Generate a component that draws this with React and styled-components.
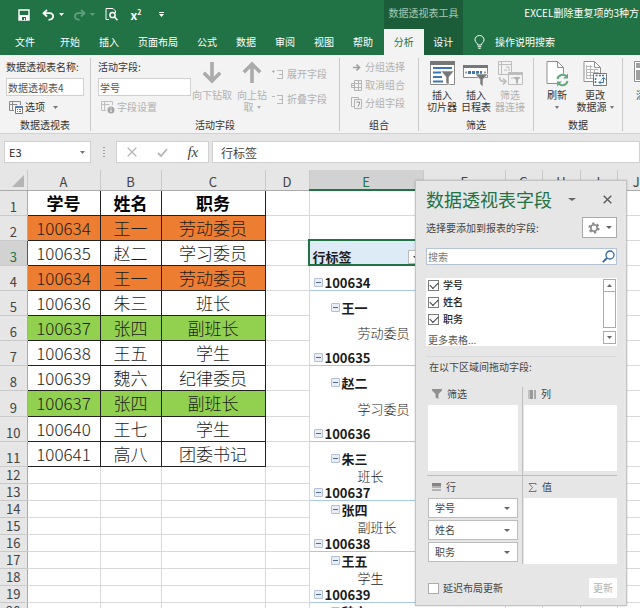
import React, { useState } from 'react'
import styled, { createGlobalStyle } from 'styled-components'

const GREEN = '#217346'
const DARK_GREEN = '#1b5c39'
const UI_FONT = '"Noto Sans CJK SC", "Noto Sans", sans-serif'

const GlobalStyle = createGlobalStyle`
  * {
    box-sizing: border-box;
  }

  body {
    margin: 0;
    font-family: ${UI_FONT};
    font-size: 10px;
    line-height: 12px;
    color: #333;
  }

  button,
  input {
    margin: 0;
    padding: 0;
    font: inherit;
    color: inherit;
    border: 0;
    background: none;
    border-radius: 0;
  }

  svg {
    display: block;
    flex: none;
  }
`

const Window = styled.div`
  display: flex;
  flex-direction: column;
  height: 100vh;
  overflow: hidden;
  background: #e6e6e6;
`

/* Header */

const Header = styled.header`
  display: flex;
  height: 55px;
  flex: none;
  background: ${GREEN};
  color: #fff;
  white-space: nowrap;
`

const HeaderSection = styled.div`
  display: flex;
  flex-direction: column;
  flex: ${p => p.$flex};
  background: ${p => (p.$dark ? DARK_GREEN : 'transparent')};
  overflow: hidden;
`

const TitleRow = styled.div`
  display: flex;
  align-items: center;
  justify-content: ${p => p.$justify || 'flex-start'};
  height: 29px;
  padding: 0 ${p => p.$right || 0}px 0 ${p => p.$left || 0}px;
`

const ContextTitle = styled.span`
  width: 100%;
  padding-bottom: 4px;
  text-align: center;
  color: #a5c9b3;
`

const DocumentTitle = styled.span`
  padding-bottom: 4px;
`

const QuickButton = styled.button`
  display: flex;
  align-items: center;
  justify-content: center;
  gap: 4px;
  width: ${p => p.$width}px;
  height: 24px;
  color: #fff;
  opacity: ${p => (p.disabled ? 0.3 : 1)};
`

const Superscript = styled.span`
  font-weight: bold;
  font-size: 12px;

  sup {
    font-size: 7px;
    line-height: 0;
  }
`

const TabRow = styled.nav`
  display: flex;
  gap: ${p => p.$gap || 0}px;
  height: 26px;
`

const Tab = styled.button`
  padding: 0 ${p => p.$pad || 9}px;
  flex: ${p => (p.$grow ? 1 : 'none')};
  color: ${p => (p.$active ? GREEN : '#fff')};
  background: ${p => (p.$active ? '#f3f3f3' : 'transparent')};
`

const TellMe = styled.button`
  display: flex;
  align-items: center;
  gap: 10px;
  padding-left: 11px;
`

/* Ribbon */

const Ribbon = styled.div`
  display: flex;
  flex: none;
  height: 79px;
  overflow: hidden;
  padding: 3px 0 2px;
  background: #f3f3f3;
  border-bottom: 1px solid #d2d2d2;
  white-space: nowrap;
`

const Group = styled.section`
  display: flex;
  flex-direction: column;
  flex: none;
  width: ${p => p.$width}px;
  border-right: 1px solid #c8c8c8;
`

const GroupBody = styled.div`
  display: flex;
  flex: 1;
  padding: 0 ${p => p.$pad || 0}px;
  justify-content: ${p => p.$justify || 'flex-start'};
`

const GroupLabel = styled.h2`
  margin: 0;
  font-size: 10px;
  font-weight: normal;
  line-height: 12px;
  text-align: center;
`

const Stack = styled.div`
  display: flex;
  flex-direction: column;
  align-items: flex-start;
  padding-top: ${p => p.$top || 0}px;
  gap: ${p => p.$gap || 0}px;
  margin-left: ${p => p.$left || 0}px;
`

const RibbonLabel = styled.label`
  line-height: 12px;
  padding-bottom: 1px;
`

const RibbonInput = styled.input`
  width: ${p => p.$width}px;
  height: 18px;
  padding: 0 1px;
  background: #fff;
  border: 1px solid #d0d0d0;
  color: #555;
`

const SmallButton = styled.button`
  display: flex;
  align-items: center;
  gap: ${p => p.$gap || 3}px;
  height: 14px;
  padding-left: ${p => p.$left || 0}px;
  color: ${p => (p.disabled ? '#b1b1b1' : '#333')};
`

const OptionsLabel = styled.span`
  margin-right: 6px;
`

const LargeButton = styled.button`
  display: flex;
  flex-direction: column;
  align-items: center;
  width: ${p => p.$width}px;
  padding-top: 3px;
  color: ${p => (p.disabled ? '#b1b1b1' : '#333')};
`

const LargeIcon = styled.span`
  display: flex;
  align-items: flex-start;
  height: 28px;
`

const ButtonLine = styled.span`
  display: flex;
  align-items: center;
  gap: 3px;
  height: 12px;
  line-height: 12px;
`

/* Formula bar */

const FormulaBar = styled.div`
  display: flex;
  flex: none;
  align-items: center;
  height: 36px;
  padding-left: 4px;
`

const NameBox = styled.div`
  display: flex;
  align-items: center;
  width: 87px;
  height: 22px;
  padding-right: 5px;
  background: #fff;
  border: 1px solid #d0d0d0;

  input {
    flex: 1;
    min-width: 0;
    padding-left: 4px;
    font-size: 11px;
    color: #222;
  }
`

const Grip = styled.div`
  width: 25px;
  display: flex;
  justify-content: center;
`

const FormulaTools = styled.div`
  display: flex;
  width: 93px;
  height: 22px;
  background: #fff;
  border: 1px solid #d0d0d0;

  button {
    display: flex;
    flex: 1;
    align-items: center;
    justify-content: center;
    color: #b4b4b4;
  }
`

const FxLabel = styled.span`
  font: italic 15px 'Liberation Serif', serif;
  color: #444;
`

const FormulaInput = styled.input`
  flex: 1;
  min-width: 0;
  height: 22px;
  margin-left: 3px;
  padding-left: 8px;
  font-size: 12px;
  color: #444;
  background: #fff;
  border: 1px solid #d0d0d0;
`

/* Sheet */

const SheetArea = styled.main`
  position: relative;
  flex: 1;
  min-height: 0;
  overflow: hidden;
  background: #fff;
`

const Sheet = styled.table`
  table-layout: fixed;
  width: 100%;
  min-width: 656px;
  border-collapse: collapse;
  font-size: 13px;
  line-height: 15px;
`

const ColumnHead = styled.th`
  height: 20px;
  padding: 3px 0 0;
  font-weight: normal;
  color: ${p => (p.$selected ? GREEN : '#444')};
  background: ${p => (p.$selected ? '#d2d2d2' : '#e6e6e6')};
  border-right: 1px solid #c9c9c9;
  border-bottom: ${p => (p.$selected ? `2px solid ${GREEN}` : '1px solid #ababab')};

  svg {
    margin: 0 3px 0 auto;
  }
`

const Row = styled.tr`
  height: ${p => p.$height}px;
`

const RowHead = styled.th`
  padding: 0 0 1px;
  vertical-align: bottom;
  font-weight: normal;
  color: ${p => (p.$selected ? GREEN : '#444')};
  background: ${p => (p.$selected ? '#d2d2d2' : '#e6e6e6')};
  border-right: 1px solid ${p => (p.$selected ? GREEN : '#ababab')};
  border-bottom: 1px solid #c9c9c9;
`

const Cell = styled.td`
  padding: 0;
  border-right: 1px solid #d9d9d9;
  border-bottom: 1px solid #d9d9d9;
`

const fills = { orange: '#ed7d31', green: '#92d050' }

const DataCell = styled.td`
  padding: 0;
  font-size: 17px;
  line-height: 20px;
  text-align: center;
  white-space: nowrap;
  font-weight: ${p => (p.$head ? 'bold' : 300)};
  color: ${p => (p.$head ? '#000' : '#1c1c1c')};
  background: ${p => fills[p.$fill] || '#fff'};
  border: 1px solid #222;
`

const PivotCell = styled.td`
  padding: 0;
  vertical-align: bottom;
  color: #1c1c1c;
  border-bottom: ${p => (p.$level === 1 ? '1px solid #a9c8e6' : '0')};
`

const PivotItem = styled.div`
  display: flex;
  align-items: center;
  gap: 2px;
  padding-left: ${p => [0, 4, 21, 48][p.$level]}px;
  font-weight: ${p => (p.$level < 3 ? 'bold' : 300)};
  white-space: nowrap;
`

const ToggleButton = styled.button`
  width: 9px;
  height: 9px;
  padding: 3px 1px;
  background: #e9eef6;
  border: 1px solid #b4bfd1;
  border-radius: 1px;

  &::after {
    content: '';
    display: block;
    height: 1px;
    background: #4d6a94;
  }
`

const SelectedCell = styled.td`
  padding: 0;
  vertical-align: bottom;
  font-weight: bold;
  color: #1c1c1c;
  background: #ddebf7;
  outline: 2px solid ${GREEN};
  outline-offset: -1px;
`

const SelectedContent = styled.div`
  display: flex;
  align-items: flex-end;
  justify-content: space-between;
  padding: 0 1px 1px 3px;
`

const FilterButton = styled.button`
  display: flex;
  align-items: center;
  justify-content: center;
  width: 14px;
  height: 14px;
  background: #fff;
  border: 1px solid #bbb;
`

/* Field pane, floats over the sheet */

const Pane = styled.aside`
  position: absolute;
  top: 10px;
  right: 13px;
  width: 212px;
  padding: 7px 9px 7px 10px;
  background: #e6e6e6;
  border: 1px solid #c3c3c3;
  box-shadow: 0 0 2px rgba(0, 0, 0, 0.2);
  color: #444;
  white-space: nowrap;
`

const PaneHeader = styled.div`
  display: flex;
  align-items: center;
  height: 22px;

  h1 {
    margin: 0;
    flex: none;
    font-size: 18px;
    font-weight: normal;
    line-height: 22px;
    color: ${GREEN};
  }
`

const PaneButton = styled.button`
  display: flex;
  align-items: center;
  justify-content: center;
  width: 20px;
  height: 20px;
  margin-left: ${p => (p.$end ? 'auto' : '10px')};
`

const ChooseRow = styled.div`
  display: flex;
  align-items: center;
  justify-content: space-between;
  margin-top: 7px;
  height: 21px;
`

const GearButton = styled.button`
  display: flex;
  align-items: center;
  justify-content: center;
  gap: 6px;
  width: 35px;
  height: 21px;
  background: #fff;
  border: 1px solid #ababab;
`

const SearchBox = styled.div`
  display: flex;
  align-items: center;
  height: 17px;
  margin-top: 10px;
  padding-right: 1px;
  background: #fff;
  border: 1px solid #b5c4d4;

  input {
    flex: 1;
    min-width: 0;
    padding-left: 1px;
  }

  input::placeholder {
    color: #777;
    opacity: 1;
  }

  button {
    display: flex;
  }
`

const FieldList = styled.div`
  display: flex;
  justify-content: space-between;
  height: 68px;
  margin-top: 13px;
  padding: 0 1px 0 2px;
  overflow: hidden;
  background: #fff;
`

const Fields = styled.div`
  display: flex;
  flex-direction: column;
  gap: 3px;
`

const Field = styled.label`
  display: flex;
  align-items: center;
  gap: 4px;
  height: 14px;
  color: ${p => (p.$strong ? '#222' : '#444')};
  font-weight: ${p => (p.$strong ? 500 : 'normal')};
`

const CheckBox = styled.input.attrs({ type: 'checkbox' })`
  appearance: none;
  display: flex;
  align-items: center;
  justify-content: center;
  width: 11px;
  height: 11px;
  background: #fff;
  border: 1px solid ${p => (p.checked ? '#7c7c7c' : '#ababab')};

  &:checked::after {
    content: '';
    width: 7px;
    height: 4px;
    margin-bottom: 2px;
    border-left: 1px solid #333;
    border-bottom: 1px solid #333;
    transform: rotate(-45deg);
  }
`

const MoreTables = styled.a`
  display: block;
  margin-top: 5px;
  color: #555;
  text-decoration: none;
`

const ScrollBar = styled.div`
  display: flex;
  flex-direction: column;
  height: 67px;
  width: 13px;
  padding-top: 1px;

  button {
    display: flex;
    flex: none;
    align-items: center;
    justify-content: center;
    height: 13px;
    background: #fff;
    border: 1px solid #ababab;
  }
`

const Thumb = styled.div`
  height: 36px;
  margin-bottom: 3px;
  background: #fff;
  border: 1px solid #ababab;
  border-top: 0;
`

const DragHint = styled.p`
  margin: 10px 0 0;
  padding: 4px 0 1px 3px;
  border-top: 1px solid #dadada;
`

const Zones = styled.div`
  display: grid;
  grid-template-columns: 96px 1fr;
  margin-top: 13px;
  padding-left: 1px;
`

const Zone = styled.section`
  padding: ${p => (p.$lower ? 4 : 0)}px ${p => (p.$left ? 4 : 0)}px ${p => (p.$lower ? 0 : 4)}px 1px;
  border-right: ${p => (p.$left ? '1px solid #bdbdbd' : '0')};
  border-top: ${p => (p.$lower ? '1px solid #bdbdbd' : '0')};
`

const ZoneTitle = styled.h3`
  display: flex;
  align-items: center;
  gap: 5px;
  height: 18px;
  margin: 0;
  padding: 0 0 4px 4px;
  font-size: 10px;
  font-weight: normal;
`

const ZoneBox = styled.div`
  display: flex;
  flex-direction: column;
  gap: 2px;
  height: 66px;
  background: ${p => (p.$filled ? 'transparent' : '#fff')};
`

const ZoneField = styled.button`
  display: flex;
  align-items: center;
  justify-content: space-between;
  height: 20px;
  padding: 0 7px 0 6px;
  background: #fff;
  border: 1px solid #bdbdbd;
`

const PaneFooter = styled.div`
  display: flex;
  align-items: center;
  justify-content: space-between;
  margin-top: 14px;
  padding-left: 2px;
`

const UpdateButton = styled.button`
  width: 28px;
  height: 20px;
  background: #fff;
  color: #b1b1b1;
`

const Caret = ({ size = 5, color = 'currentColor', up }) => (
  <svg width={size} height="3" viewBox="0 0 6 3" preserveAspectRatio="none">
    <path d={up ? 'M0 3h6L3 0z' : 'M0 0h6L3 3z'} fill={color} />
  </svg>
)

const SaveIcon = () => (
  <svg width="12" height="12" viewBox="0 0 12 12">
    <path d="M1 1h10v10H1z" fill="none" stroke="#fff" strokeWidth="1.4" />
    <path d="M1 6h10v5H1z" fill="#fff" />
    <path d="M4 8h4v3H4z" fill={GREEN} />
    <path d="M6 9h1v2H6z" fill="#fff" />
  </svg>
)

const UndoIcon = ({ flip }) => (
  <svg width="13" height="12" viewBox="0 0 13 12">
    <g transform={flip ? 'matrix(-1 0 0 1 13 0)' : undefined} fill="none" stroke="#fff" strokeWidth="1.8">
      <path d="M5 1L1.5 4.2 5 7.5" />
      <path d="M2 4.2h5.5c5 0 5 6.6-1 6.6" />
    </g>
  </svg>
)

const PreviewIcon = () => (
  <svg width="13" height="13" viewBox="0 0 13 13" fill="none" stroke="#fff">
    <path d="M4 11.5H1V.5h7l2.5 2.5v2" />
    <circle cx="7.5" cy="7" r="2.6" strokeWidth="1.5" />
    <path d="M9.5 9l3 3.3" strokeWidth="1.6" />
  </svg>
)

const BulbIcon = () => (
  <svg width="11" height="14" viewBox="0 0 11 14" fill="none" stroke="#fff">
    <path d="M3.7 10c0-2-2.700-2.500-2.700-5.200a4.500 4.300 0 0 1 9 0C10 7.500 7.300 8 7.300 10zM3.700 11.700h3.600M4.300 13.300h2.400" />
  </svg>
)

const OptionsIcon = ({ disabled }) => (
  <svg width="14" height="13" viewBox="0 0 14 13" fill="none" stroke={disabled ? '#c0c0c0' : '#8a8a8a'}>
    <path d="M5 9.5H.5V.5h11V4M.5 3.5h8M3.5.5v9" />
    {disabled ? (
      <g>
        <circle cx="10" cy="9" r="3.5" fill="#a6a6a6" stroke="none" />
        <path d="M10 8.5v2.5M10 6.5v1" stroke="#fff" />
      </g>
    ) : (
      <g>
        <path d="M6.5 5.5h7v7h-7z" fill="#fff" stroke="#777" />
        <path d="M6.5 6h7" stroke="#4a7ebb" strokeWidth="2" />
        <path d="M8 8.5h1M10 8.5h2M8 10.5h1M10 10.5h2" stroke="#4a7ebb" />
      </g>
    )}
  </svg>
)

const DrillIcon = ({ up }) => (
  <svg width="20" height="23" viewBox="0 0 20 23">
    <g transform={up ? 'matrix(1 0 0 -1 0 23)' : undefined} fill="none" stroke="#ababab" strokeWidth="3.6">
      <path d="M10 1v19M1.800 11.800L10 20l8.200-8.200" />
    </g>
  </svg>
)

const ExpandIcon = ({ minus }) => (
  <svg width="12" height="11" viewBox="0 0 12 11" stroke="#b8b8b8" fill="none">
    <path d={minus ? 'M0 2.5h3' : 'M0 2.5h3M1.5 1v3'} />
    <path d="M5 1.5h6M7 5.5h4M5 9.5h6M10.5 1.5v8" />
  </svg>
)

const GroupArrowIcon = () => (
  <svg width="11" height="11" viewBox="0 0 11 11" fill="none" stroke="#9c9c9c" strokeWidth="1.6">
    <path d="M2 5.5h6M5.5 2.5l3 3-3 3" />
  </svg>
)

const UngroupIcon = () => (
  <svg width="11" height="11" viewBox="0 0 11 11" fill="none" stroke="#b4b4b4">
    <path d="M3.5.5h7v10h-7zM3.5 3.5h7M3.5 7.5h7M7.5.5v10M.5 3.5h3v4h-3zM1 5.5h3" />
  </svg>
)

const GroupFieldIcon = () => (
  <svg width="11" height="12" viewBox="0 0 11 12" fill="none" stroke="#b4b4b4">
    <path d="M2.5 9.5h-2v-9h7v2M3.5 2.5h7v9h-7z" />
    <path d="M5.5 5h3v1.5L7 9.5" stroke="#8c8c8c" />
  </svg>
)

const SlicerIcon = () => (
  <svg width="25" height="25" viewBox="0 0 25 25">
    <path d="M.5.5h24v23H.5z" fill="#fff" stroke="#8a8a8a" />
    <path d="M0 0h25v4H0z" fill="#777" />
    <path d="M3 7h19M3 11.5h8M3 16h9M3 20.5h10" stroke="#3c76b5" strokeWidth="2.2" />
    <path d="M11 10h13l-5 6v8l-3-2v-6z" fill="#777" stroke="#fff" strokeWidth=".6" />
  </svg>
)

const TimelineIcon = () => (
  <svg width="26" height="27" viewBox="0 0 26 27">
    <path d="M.5 4.5h24v12H.5z" fill="#fff" stroke="#8a8a8a" />
    <path d="M0 4h25v3H0z" fill="#777" />
    <path d="M2 11.5h2M21 11.5h2" stroke="#999" strokeWidth="2" />
    <path d="M5 11.5h14" stroke="#3c76b5" strokeWidth="3" strokeDasharray="3 1" />
    <path d="M12 13h13l-5 5.5V26l-3-3v-4.500z" fill="#777" stroke="#fff" strokeWidth=".6" />
  </svg>
)

const ConnectionIcon = () => (
  <svg width="25" height="25" viewBox="0 0 25 25" fill="none" stroke="#bdbdbd">
    <path d="M.5.5h13v13H.5zM.5 3.5h13M3.5.5v13M8 6h3v4M6 9h3" />
    <path d="M10.5 11.5h14v12h-14z" fill="#f3f3f3" />
    <path d="M10.5 12.5h14" strokeWidth="3" />
    <path d="M13 17h4" />
    <path d="M15.5 16h7l-2.500 3v4l-2-1v-3z" fill="#b0b0b0" stroke="none" />
    <path d="M1.5 16c0 4 2 4.500 6 4.500M5 17.500l3 3-3 3" strokeWidth="1.6" />
  </svg>
)

const RefreshIcon = () => (
  <svg width="23" height="26" viewBox="0 0 23 26" fill="none">
    <path d="M1 .5h10.500L17.500 6.500V22.500H1z" fill="#fff" stroke="#8f8f8f" />
    <path d="M11.5.5v6h6" stroke="#8f8f8f" />
    <circle cx="16.5" cy="19" r="6.5" fill="#f7f7f7" />
    <path d="M11.5 18a5.200 5.200 0 0 1 9-2.500M21.500 20a5.200 5.200 0 0 1-9 2.500" stroke="#67a884" strokeWidth="2" />
    <path d="M22 12.500v5h-5zM11 25.500v-5h5z" fill="#67a884" />
  </svg>
)

const SourceIcon = () => (
  <svg width="24" height="26" viewBox="0 0 24 26" fill="none" stroke="#8f8f8f">
    <path d="M1 .5h10.500L17.500 6.500V20.500H1z" fill="#fff" />
    <path d="M11.5.5v6h6" />
    <path d="M3.5 5.5h6M3.5 8.5h12M3.5 11.5h12M3.5 14.5h12M3.5 17.5h12M3.5 4v14M7.5 4v14M11.5 8v10" stroke="#b5b5b5" />
    <path d="M10.5 12.5h13v12h-13z" fill="#fff" stroke="#777" />
    <path d="M12.5 14.5h2M16 14.5h5M12.500 17v5" stroke="#3c76b5" strokeWidth="1.5" strokeDasharray="2 1" />
    <path d="M16 21.500h4.500V17M18 19.500l-2 2 2 2M18.500 18.500l2-2 2 2" stroke="#3c76b5" />
  </svg>
)

const ClearIcon = () => (
  <svg width="24" height="25" viewBox="0 0 24 25" fill="none" stroke="#8f8f8f">
    <path d="M.5.5h22v20H.5z" fill="#fff" />
    <path d="M2 2h5v5H2zM2 9h5v10H2zM9 2h12v5H9z" fill="#a0a0a0" stroke="none" />
  </svg>
)

const GearIcon = () => (
  <svg width="12" height="12" viewBox="0 0 12 12" fill="none" stroke="#8a8a8a">
    <circle cx="6" cy="6" r="3.2" strokeWidth="1.6" />
    <circle cx="6" cy="6" r="4.7" strokeWidth="1.8" strokeDasharray="2.4 2.52" />
  </svg>
)

const SearchIcon = () => (
  <svg width="13" height="13" viewBox="0 0 13 13" fill="none" stroke="#2e6aa8">
    <circle cx="8" cy="5" r="4" strokeWidth="1.3" />
    <path d="M5 8l-4.200 4.200" strokeWidth="1.8" />
  </svg>
)

const zoneIcons = {
  filter: (
    <svg width="10" height="10" viewBox="0 0 10 10">
      <path d="M0 0h10v1.5L6.5 5v5l-3-1.500V5L0 1.500z" fill="#909090" />
    </svg>
  ),
  columns: (
    <svg width="8" height="9" viewBox="0 0 8 9">
      <path d="M0 0h2v9H0z" fill="#c2c2c2" />
      <path d="M2 0h3v9H2z" fill="#999" />
      <path d="M6 0h2v9H6z" fill="#a9a9a9" />
    </svg>
  ),
  rows: (
    <svg width="9" height="8" viewBox="0 0 9 8">
      <path d="M0 0h9v3H0z" fill="#858585" />
      <path d="M0 3h9v2H0zM0 6h9v2H0z" fill="#b2b2b2" />
    </svg>
  ),
  sum: (
    <svg width="9" height="9" viewBox="0 0 9 9" fill="none" stroke="#777">
      <path d="M8 2V.5H1L4.500 4.500 1 8.500h7V7" />
    </svg>
  ),
}

const menuTabs = ['开始', '插入', '页面布局', '公式', '数据', '审阅', '视图', '帮助']

const columns = [
  ['A', 73],
  ['B', 61],
  ['C', 104],
  ['D', 44],
  ['E', 114],
  ['F', 82],
  ['G', 37],
  ['H', 38],
  ['I', 37],
  ['J'],
]

const students = [
  ['学号', '姓名', '职务'],
  ['100634', '王一', '劳动委员', 'orange'],
  ['100635', '赵二', '学习委员'],
  ['100634', '王一', '劳动委员', 'orange'],
  ['100636', '朱三', '班长'],
  ['100637', '张四', '副班长', 'green'],
  ['100638', '王五', '学生'],
  ['100639', '魏六', '纪律委员'],
  ['100637', '张四', '副班长', 'green'],
  ['100640', '王七', '学生'],
  ['100641', '高八', '团委书记'],
]

// keyed by sheet row: [level, text]
const pivot = {
  4: [1, '100634'],
  5: [2, '王一'],
  6: [3, '劳动委员'],
  7: [1, '100635'],
  8: [2, '赵二'],
  9: [3, '学习委员'],
  10: [1, '100636'],
  11: [2, '朱三'],
  12: [3, '班长'],
  13: [1, '100637'],
  14: [2, '张四'],
  15: [3, '副班长'],
  16: [1, '100638'],
  17: [2, '王五'],
  18: [3, '学生'],
  19: [1, '100639'],
  20: [2, '魏六'],
}

const ROW_COUNT = 40

const rowHeight = n => {
  if (n === 9) return 26
  return n <= students.length ? 25 : 17
}

const AppHeader = () => (
  <Header>
    <HeaderSection $flex="0 0 384px">
      <TitleRow $left={11}>
        <QuickButton $width={26} aria-label="保存">
          <SaveIcon />
        </QuickButton>
        <QuickButton $width={32} aria-label="撤消">
          <UndoIcon />
          <Caret />
        </QuickButton>
        <QuickButton $width={30} aria-label="恢复" disabled>
          <UndoIcon flip />
          <Caret />
        </QuickButton>
        <QuickButton $width={24} aria-label="打印预览">
          <PreviewIcon />
        </QuickButton>
        <QuickButton $width={26}>
          <Superscript>
            x<sup>2</sup>
          </Superscript>
        </QuickButton>
        <QuickButton $width={24} aria-label="自定义快速访问工具栏">
          <svg width="5" height="5" viewBox="0 0 5 5">
            <path d="M0 0h5v1H0zM0 2h5L2.5 5z" fill="#fff" />
          </svg>
        </QuickButton>
      </TitleRow>
      <TabRow $gap={1}>
        <Tab $pad={15}>文件</Tab>
        {menuTabs.map(name => (
          <Tab key={name}>{name}</Tab>
        ))}
      </TabRow>
    </HeaderSection>
    <HeaderSection $flex="0 0 79px" $dark>
      <TitleRow>
        <ContextTitle>数据透视表工具</ContextTitle>
      </TitleRow>
      <TabRow>
        <Tab $grow $active>
          分析
        </Tab>
        <Tab $grow>设计</Tab>
      </TabRow>
    </HeaderSection>
    <HeaderSection $flex="1">
      <TitleRow $justify="flex-end" $right={1}>
        <DocumentTitle>EXCEL删除重复项的3种方</DocumentTitle>
      </TitleRow>
      <TabRow>
        <TellMe>
          <BulbIcon />
          操作说明搜索
        </TellMe>
      </TabRow>
    </HeaderSection>
  </Header>
)

const AppRibbon = () => (
  <Ribbon>
    <Group $width={91}>
      <GroupBody $pad={6}>
        <Stack $top={3} $gap={4}>
          <RibbonLabel htmlFor="pivot-name">数据透视表名称:</RibbonLabel>
          <RibbonInput id="pivot-name" $width={78} defaultValue="数据透视表4" />
          <SmallButton $left={3} $gap={2}>
            <OptionsIcon />
            <OptionsLabel>选项</OptionsLabel>
            <Caret color="#777" />
          </SmallButton>
        </Stack>
      </GroupBody>
      <GroupLabel>数据透视表</GroupLabel>
    </Group>
    <Group $width={249}>
      <GroupBody $pad={7}>
        <Stack $top={3} $gap={4}>
          <RibbonLabel htmlFor="active-field">活动字段:</RibbonLabel>
          <RibbonInput id="active-field" $width={93} defaultValue="学号" />
          <SmallButton $left={3} $gap={2} disabled>
            <OptionsIcon disabled />
            字段设置
          </SmallButton>
        </Stack>
        <LargeButton $width={42} disabled>
          <LargeIcon>
            <DrillIcon />
          </LargeIcon>
          <ButtonLine>向下钻取</ButtonLine>
        </LargeButton>
        <LargeButton $width={38} disabled>
          <LargeIcon>
            <DrillIcon up />
          </LargeIcon>
          <ButtonLine>向上钻</ButtonLine>
          <ButtonLine>
            取
            <Caret size={4} />
          </ButtonLine>
        </LargeButton>
        <Stack $top={9} $gap={11} $left={1}>
          <SmallButton disabled>
            <ExpandIcon />
            展开字段
          </SmallButton>
          <SmallButton disabled>
            <ExpandIcon minus />
            折叠字段
          </SmallButton>
        </Stack>
      </GroupBody>
      <GroupLabel>活动字段</GroupLabel>
    </Group>
    <Group $width={79}>
      <GroupBody $pad={11}>
        <Stack $top={2} $gap={4}>
          <SmallButton disabled>
            <GroupArrowIcon />
            分组选择
          </SmallButton>
          <SmallButton disabled>
            <UngroupIcon />
            取消组合
          </SmallButton>
          <SmallButton disabled>
            <GroupFieldIcon />
            分组字段
          </SmallButton>
        </Stack>
      </GroupBody>
      <GroupLabel>组合</GroupLabel>
    </Group>
    <Group $width={115}>
      <GroupBody $pad={6}>
        <LargeButton $width={34}>
          <LargeIcon>
            <SlicerIcon />
          </LargeIcon>
          <ButtonLine>插入</ButtonLine>
          <ButtonLine>切片器</ButtonLine>
        </LargeButton>
        <LargeButton $width={34}>
          <LargeIcon>
            <TimelineIcon />
          </LargeIcon>
          <ButtonLine>插入</ButtonLine>
          <ButtonLine>日程表</ButtonLine>
        </LargeButton>
        <LargeButton $width={34} disabled>
          <LargeIcon>
            <ConnectionIcon />
          </LargeIcon>
          <ButtonLine>筛选</ButtonLine>
          <ButtonLine>器连接</ButtonLine>
        </LargeButton>
      </GroupBody>
      <GroupLabel>筛选</GroupLabel>
    </Group>
    <Group $width={89}>
      <GroupBody $pad={6}>
        <LargeButton $width={34}>
          <LargeIcon>
            <RefreshIcon />
          </LargeIcon>
          <ButtonLine>刷新</ButtonLine>
          <ButtonLine>
            <Caret size={4} color="#777" />
          </ButtonLine>
        </LargeButton>
        <LargeButton $width={42}>
          <LargeIcon>
            <SourceIcon />
          </LargeIcon>
          <ButtonLine>更改</ButtonLine>
          <ButtonLine>
            数据源
            <Caret size={4} color="#777" />
          </ButtonLine>
        </LargeButton>
      </GroupBody>
      <GroupLabel>数据</GroupLabel>
    </Group>
    <Group $width={120}>
      <GroupBody $pad={6}>
        <LargeButton $width={34}>
          <LargeIcon>
            <ClearIcon />
          </LargeIcon>
          <ButtonLine>清除</ButtonLine>
        </LargeButton>
      </GroupBody>
    </Group>
  </Ribbon>
)

const SheetRow = ({ n }) => {
  const student = students[n - 1]
  const item = pivot[n]

  return (
    <Row $height={rowHeight(n)}>
      <RowHead scope="row" $selected={n === 3}>
        {n}
      </RowHead>
      {[0, 1, 2].map(i =>
        student ? (
          <DataCell key={i} $head={n === 1} $fill={student[3]}>
            {student[i]}
          </DataCell>
        ) : (
          <Cell key={i} />
        )
      )}
      <Cell />
      {n === 3 && (
        <SelectedCell>
          <SelectedContent>
            行标签
            <FilterButton aria-label="筛选">
              <Caret color="#555" />
            </FilterButton>
          </SelectedContent>
        </SelectedCell>
      )}
      {item && (
        <PivotCell $level={item[0]}>
          <PivotItem $level={item[0]}>
            {item[0] < 3 && <ToggleButton aria-label="折叠" />}
            {item[1]}
          </PivotItem>
        </PivotCell>
      )}
      {n !== 3 && !item && <Cell />}
      {columns.slice(5).map(([name]) => (
        <Cell key={name} />
      ))}
    </Row>
  )
}

const FieldPane = () => {
  const [checked, setChecked] = useState({ 学号: true, 姓名: true, 职务: true })
  const [defer, setDefer] = useState(false)
  const names = Object.keys(checked)

  return (
    <Pane>
      <PaneHeader>
        <h1>数据透视表字段</h1>
        <PaneButton aria-label="任务窗格选项">
          <Caret size={8} color="#666" />
        </PaneButton>
        <PaneButton $end aria-label="关闭">
          <svg width="9" height="9" viewBox="0 0 9 9" stroke="#555" strokeWidth="1.3">
            <path d="M.7.7l7.600 7.600M8.300.7L.7 8.300" />
          </svg>
        </PaneButton>
      </PaneHeader>
      <ChooseRow>
        <span>选择要添加到报表的字段:</span>
        <GearButton aria-label="工具">
          <GearIcon />
          <Caret size={6} color="#666" />
        </GearButton>
      </ChooseRow>
      <SearchBox>
        <input type="text" placeholder="搜索" aria-label="搜索" />
        <button aria-label="开始搜索">
          <SearchIcon />
        </button>
      </SearchBox>
      <FieldList>
        <Fields>
          {names.map(name => (
            <Field key={name} $strong htmlFor={`field-${name}`}>
              <CheckBox
                id={`field-${name}`}
                checked={checked[name]}
                onChange={e => setChecked({ ...checked, [name]: e.target.checked })}
              />
              {name}
            </Field>
          ))}
          <MoreTables href="#more">更多表格...</MoreTables>
        </Fields>
        <ScrollBar>
          <button aria-label="向上滚动">
            <Caret up color="#666" />
          </button>
          <Thumb />
          <button aria-label="向下滚动">
            <Caret color="#666" />
          </button>
        </ScrollBar>
      </FieldList>
      <DragHint>在以下区域间拖动字段:</DragHint>
      <Zones>
        <Zone $left>
          <ZoneTitle>{zoneIcons.filter}筛选</ZoneTitle>
          <ZoneBox />
        </Zone>
        <Zone>
          <ZoneTitle>{zoneIcons.columns}列</ZoneTitle>
          <ZoneBox />
        </Zone>
        <Zone $left $lower>
          <ZoneTitle>{zoneIcons.rows}行</ZoneTitle>
          <ZoneBox $filled>
            {names.map(name => (
              <ZoneField key={name}>
                {name}
                <Caret size={6} color="#666" />
              </ZoneField>
            ))}
          </ZoneBox>
        </Zone>
        <Zone $lower>
          <ZoneTitle>{zoneIcons.sum}值</ZoneTitle>
          <ZoneBox />
        </Zone>
      </Zones>
      <PaneFooter>
        <Field htmlFor="defer">
          <CheckBox id="defer" checked={defer} onChange={e => setDefer(e.target.checked)} />
          延迟布局更新
        </Field>
        <UpdateButton disabled={!defer}>更新</UpdateButton>
      </PaneFooter>
    </Pane>
  )
}

export default function App() {
  const rows = Array.from({ length: ROW_COUNT }, (_, i) => i + 1)

  return (
    <Window>
      <GlobalStyle />
      <AppHeader />
      <AppRibbon />
      <FormulaBar>
        <NameBox>
          <input aria-label="名称框" defaultValue="E3" />
          <Caret color="#777" />
        </NameBox>
        <Grip>
          <svg width="2" height="10" viewBox="0 0 2 10">
            <path d="M0 0h2v1H0zM0 3h2v1H0zM0 6h2v1H0zM0 9h2v1H0z" fill="#999" />
          </svg>
        </Grip>
        <FormulaTools>
          <button aria-label="取消">
            <svg width="10" height="10" viewBox="0 0 10 10" stroke="currentColor" strokeWidth="1.3">
              <path d="M.7.7l8.600 8.600M9.300.7L.7 9.300" />
            </svg>
          </button>
          <button aria-label="输入">
            <svg width="11" height="9" viewBox="0 0 11 9" fill="none" stroke="currentColor" strokeWidth="1.8">
              <path d="M1 5l3 3 6-7" />
            </svg>
          </button>
          <button aria-label="插入函数">
            <FxLabel>fx</FxLabel>
          </button>
        </FormulaTools>
        <FormulaInput aria-label="编辑栏" defaultValue="行标签" />
      </FormulaBar>
      <SheetArea>
        <Sheet>
          <colgroup>
            <col width="27" />
            {columns.map(([name, width]) => (
              <col key={name} width={width} />
            ))}
          </colgroup>
          <thead>
            <tr>
              <ColumnHead>
                <svg width="12" height="12" viewBox="0 0 12 12">
                  <path d="M12 0v12H0z" fill="#b4b4b4" />
                </svg>
              </ColumnHead>
              {columns.map(([name]) => (
                <ColumnHead key={name} scope="col" $selected={name === 'E'}>
                  {name}
                </ColumnHead>
              ))}
            </tr>
          </thead>
          <tbody>
            {rows.map(n => (
              <SheetRow key={n} n={n} />
            ))}
          </tbody>
        </Sheet>
        <FieldPane />
      </SheetArea>
    </Window>
  )
}
